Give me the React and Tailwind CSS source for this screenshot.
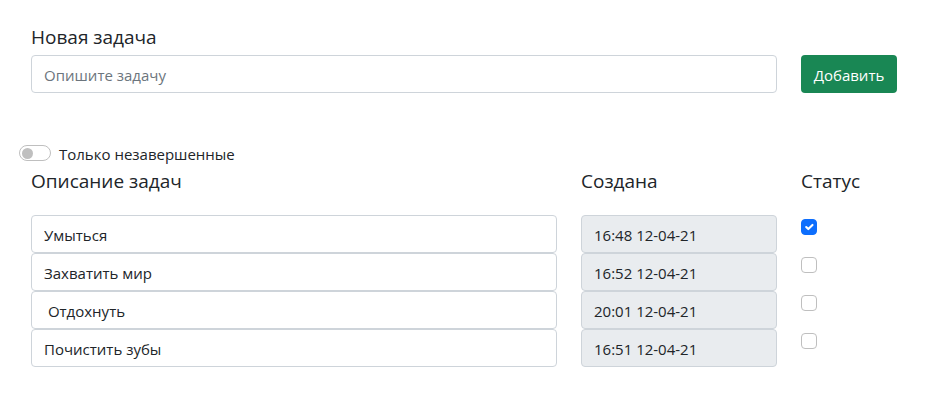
import { useState } from "react";

const initialTasks = [
  { id: 1, text: "Умыться", created: "16:48 12-04-21", done: true },
  { id: 2, text: "Захватить мир", created: "16:52 12-04-21", done: false },
  { id: 3, text: " Отдохнуть", created: "20:01 12-04-21", done: false },
  { id: 4, text: "Почистить зубы", created: "16:51 12-04-21", done: false },
];

const field =
  "block h-[38px] w-full rounded border border-[#ced4da] px-3 pt-0.5 text-[15px] leading-6 text-[#212529] placeholder:text-[#6c757d] focus:outline-2 focus:outline-[#86b7fe]";
const heading = "px-3 text-[19px] leading-6 font-normal";

function NewTask({ onAdd }) {
  const [text, setText] = useState("");
  const submit = (event) => {
    event.preventDefault();
    if (text.trim()) {
      onAdd(text);
      setText("");
    }
  };
  return (
    <form onSubmit={submit} className="grid grid-cols-[770fr_128fr] items-end">
      <div>
        <label htmlFor="new-task" className={`${heading} mb-1.5 block`}>
          Новая задача
        </label>
        <div className="px-3">
          <input
            id="new-task"
            type="text"
            placeholder="Опишите задачу"
            value={text}
            onChange={(event) => setText(event.target.value)}
            className={`${field} bg-white`}
          />
        </div>
      </div>
      <div className="px-3">
        <button
          type="submit"
          className="h-[38px] min-w-24 rounded bg-[#198754] px-3 pt-0.5 text-[15px] leading-6 text-white hover:bg-[#157347]"
        >
          Добавить
        </button>
      </div>
    </form>
  );
}

function TaskRow({ task, onText, onToggle }) {
  return (
    <li className="grid grid-cols-[550fr_220fr_128fr]">
      <div className="px-3">
        <input
          type="text"
          aria-label="Описание задачи"
          value={task.text}
          onChange={(event) => onText(event.target.value)}
          className={`${field} bg-white`}
        />
      </div>
      <div className="px-3">
        <input
          type="text"
          aria-label="Создана"
          value={task.created}
          readOnly
          className={`${field} bg-[#e9ecef]`}
        />
      </div>
      <div className="px-3 pt-1">
        <label className="grid size-4">
          <input
            type="checkbox"
            aria-label="Статус"
            checked={task.done}
            onChange={onToggle}
            className="col-start-1 row-start-1 size-4 appearance-none rounded border border-[#bfbfbf] bg-white checked:border-[#0d6efd] checked:bg-[#0d6efd]"
          />
          {task.done && (
            <svg
              viewBox="0 0 20 20"
              aria-hidden="true"
              className="pointer-events-none z-10 col-start-1 row-start-1 m-px size-3.5"
            >
              <path
                d="M6 10l3 3l6-6"
                fill="none"
                stroke="#fff"
                strokeWidth="3"
                strokeLinecap="round"
                strokeLinejoin="round"
              />
            </svg>
          )}
        </label>
      </div>
    </li>
  );
}

export default function App() {
  const [tasks, setTasks] = useState(initialTasks);
  const [onlyOpen, setOnlyOpen] = useState(false);

  const update = (id, change) =>
    setTasks((list) => list.map((t) => (t.id === id ? { ...t, ...change } : t)));

  const add = (text) =>
    setTasks((list) => [
      ...list,
      {
        id: Date.now(),
        text,
        created: new Date().toLocaleTimeString("ru", { hour: "2-digit", minute: "2-digit" }),
        done: false,
      },
    ]);

  const visible = onlyOpen ? tasks.filter((t) => !t.done) : tasks;

  return (
    <main className="min-h-screen bg-white px-[19px] pt-[25px] pb-10 font-['Open_Sans','Noto_Sans',sans-serif] text-[15px] text-[#212529]">
      <NewTask onAdd={add} />

      <label className="mt-12 flex h-6 items-center gap-2 leading-6">
        <input
          type="checkbox"
          role="switch"
          checked={onlyOpen}
          onChange={(event) => setOnlyOpen(event.target.checked)}
          className="flex h-4 w-8 appearance-none items-center rounded-full border border-[#bfbfbf] bg-white px-0.5 before:size-[11px] before:rounded-full before:bg-[#bfbfbf] checked:justify-end checked:border-[#0d6efd] checked:bg-[#0d6efd] checked:before:bg-white"
        />
        <span className="pt-0.5">Только незавершенные</span>
      </label>

      <section className="mt-1">
        <div className="grid grid-cols-[550fr_220fr_128fr]">
          <h2 className={heading}>Описание задач</h2>
          <h2 className={heading}>Создана</h2>
          <h2 className={heading}>Статус</h2>
        </div>
        <ul className="mt-[22px]">
          {visible.map((task) => (
            <TaskRow
              key={task.id}
              task={task}
              onText={(text) => update(task.id, { text })}
              onToggle={() => update(task.id, { done: !task.done })}
            />
          ))}
        </ul>
      </section>
    </main>
  );
}
